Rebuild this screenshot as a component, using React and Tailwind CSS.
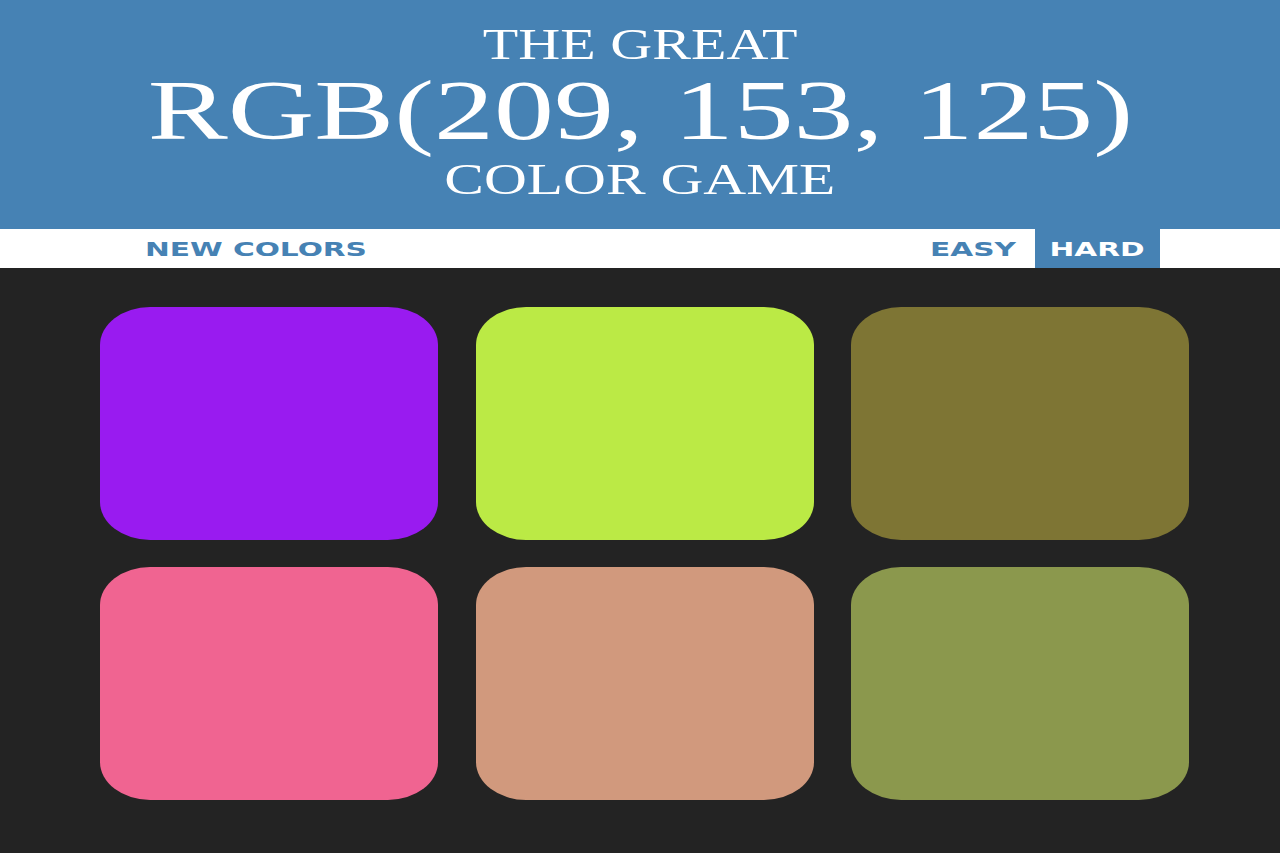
import React, { useState } from 'react';

const colors = [
  'rgb(153, 27, 240)',
  'rgb(187, 234, 69)',
  'rgb(126, 117, 52)',
  'rgb(240, 100, 145)',
  'rgb(209, 153, 125)',
  'rgb(139, 152, 77)',
];

const App = () => {
  const [mode, setMode] = useState('hard');

  return (
    <div className="min-h-[853px] bg-[#232323] font-['Liberation_Sans',sans-serif]">
      <div className="h-[229px] bg-[#4682b4] text-white font-['Liberation_Serif',serif] flex flex-col items-center pt-[23px]">
        <span className="block text-[44px] leading-[44px] scale-x-[1.32]">THE GREAT</span>
        <span className="block text-[85px] leading-[85px] mt-[1px] scale-x-[1.41]">RGB(209, 153, 125)</span>
        <span className="block text-[44px] leading-[44px] mt-[5px] scale-x-[1.35]">COLOR GAME</span>
      </div>

      <div className="h-[39px] bg-white flex items-stretch font-['DejaVu_Sans',sans-serif] font-bold text-[#4682b4] text-[20px]">
        <div className="w-[120px]" />
        <button className="w-[272px] flex items-center justify-center">
          <span className="inline-block scale-x-[1.48]">NEW COLORS</span>
        </button>
        <div className="flex-1" />
        <button
          onClick={() => setMode('easy')}
          className={'w-[123px] flex items-center justify-center ' + (mode === 'easy' ? 'bg-[#4682b4] text-white' : '')}
        >
          <span className="inline-block scale-x-[1.48]">EASY</span>
        </button>
        <button
          onClick={() => setMode('hard')}
          className={'w-[125px] flex items-center justify-center ' + (mode === 'hard' ? 'bg-[#4682b4] text-white' : '')}
        >
          <span className="inline-block scale-x-[1.48]">HARD</span>
        </button>
        <div className="w-[120px]" />
      </div>

      <div className="w-[1089px] ml-[100px] pt-[39px] grid grid-cols-3 gap-x-[37.5px] gap-y-[27px]">
        {colors.map((c) => (
          <div key={c} className="h-[233px] rounded-[50px/38px]" style={{ backgroundColor: c }} />
        ))}
      </div>
    </div>
  );
};

export default App;
